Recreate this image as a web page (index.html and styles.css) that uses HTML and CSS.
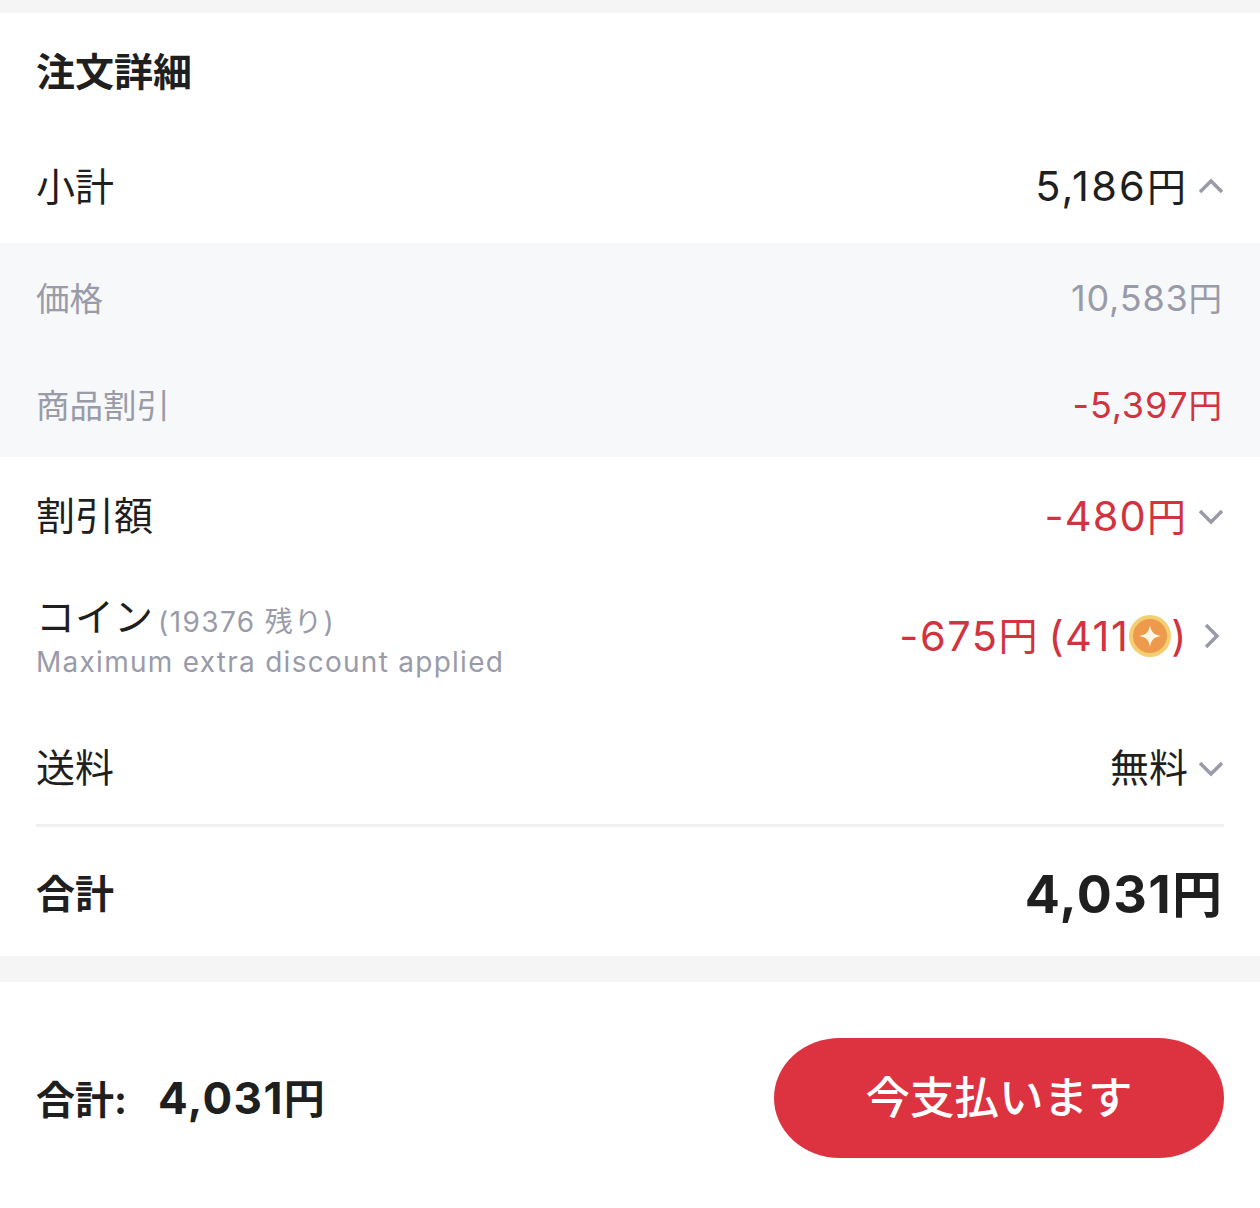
FILE: index.html
```html
<!DOCTYPE html>
<html lang="ja">
<head>
    <meta charset="UTF-8">
    <meta name="viewport" content="width=device-width, initial-scale=1.0">
    <title>注文詳細</title>
    <link rel="stylesheet" href="styles.css">
</head>
<body>
    <section class="order-card">
        <h2 class="order-title">注文詳細</h2>

        <div class="row row-subtotal">
            <span class="row-label">小計</span>
            <div class="row-value">
                <span><span class="num">5,186</span>円</span>
                <svg class="chevron" viewBox="0 0 24 24"><path d="M1 17 L12 6 L23 17"/></svg>
            </div>
        </div>

        <div class="sub-panel">
            <div class="sub-row">
                <span>価格</span>
                <span><span class="sub-num">10,583</span>円</span>
            </div>
            <div class="sub-row">
                <span>商品割引</span>
                <span class="red"><span class="sub-num">-5,397</span>円</span>
            </div>
        </div>

        <div class="row row-discount">
            <span class="row-label">割引額</span>
            <div class="row-value red">
                <span><span class="num">-480</span>円</span>
                <svg class="chevron" viewBox="0 0 24 24"><path d="M1 7 L12 18 L23 7"/></svg>
            </div>
        </div>

        <div class="row row-coin">
            <div class="coin-info">
                <div class="coin-head">
                    <span class="row-label">コイン</span>
                    <span class="coin-left">(19376 残り)</span>
                </div>
                <div class="coin-note">Maximum extra discount applied</div>
            </div>
            <div class="row-value red">
                <span class="coin-amount"><span class="num">-675</span>円 <span class="num">(411</span><svg class="coin" viewBox="0 0 42 42">
                    <circle cx="21" cy="21" r="21" fill="#f3cf72"/>
                    <circle cx="21" cy="21" r="17" fill="#ee9a4c"/>
                    <path d="M21 10 C22 17 25 20 32 21 C25 22 22 25 21 32 C20 25 17 22 10 21 C17 20 20 17 21 10 Z" fill="#fff6e6"/>
                </svg><span class="num">)</span></span>
                <svg class="chevron chevron-right" viewBox="0 0 24 24"><path d="M7 1 L18 12 L7 23"/></svg>
            </div>
        </div>

        <div class="row row-shipping">
            <span class="row-label">送料</span>
            <div class="row-value">
                <span>無料</span>
                <svg class="chevron" viewBox="0 0 24 24"><path d="M1 7 L12 18 L23 7"/></svg>
            </div>
        </div>

        <div class="row row-total">
            <span class="total-label">合計</span>
            <span class="total-value"><span class="total-num">4,031</span>円</span>
        </div>
    </section>

    <footer class="pay-bar">
        <div class="pay-total">合計:<span class="pay-num">4,031</span><span class="pay-yen">円</span></div>
        <button class="pay-button">今支払います</button>
    </footer>
</body>
</html>
```

FILE: styles.css
```css
body {
    margin: 0;
    padding-top: 13px;
    background-color: #f5f5f5;
    font-family: Inter, "Noto Sans CJK JP", sans-serif;
    color: #1f1f1f;
}
.order-card {
    height: 943px;
    background-color: #fff;
    margin-bottom: 26px;
}
.order-title {
    margin: 0;
    height: 117px;
    padding: 0 36px;
    line-height: 118px;
    font-size: 39px;
    font-weight: 700;
}
.row {
    display: flex;
    justify-content: space-between;
    align-items: center;
    margin: 0 36px;
}
.row-subtotal {
    height: 113px;
}
.row-discount {
    height: 118px;
}
.row-coin {
    height: 122px;
}
.row-shipping {
    height: 130px;
    padding-top: 14px;
    box-sizing: border-box;
    border-bottom: 3px solid #f0f0f0;
}
.row-total {
    height: 128px;
}
.row-label {
    font-size: 39px;
    line-height: 50px;
}
.row-value {
    display: flex;
    align-items: center;
    font-size: 39px;
    line-height: 50px;
}
.num {
    font-size: 41.5px;
    letter-spacing: 1.8px;
}
.row-subtotal .num {
    letter-spacing: 2.2px;
}
.row-discount .num {
    letter-spacing: 1.2px;
}
.coin-amount {
    display: flex;
    align-items: center;
    white-space: pre;
}
.coin-amount .num {
    letter-spacing: 1.5px;
}
.chevron {
    width: 24px;
    height: 24px;
    margin: 0 1px 0 13px;
    fill: none;
    stroke: #9a9ba9;
    stroke-width: 3.5;
}
.row-shipping .chevron {
    margin-left: 11px;
}
.chevron-right {
    margin-left: 11px;
}
.red {
    color: #d1333f;
}
.sub-panel {
    background-color: #f7f8fa;
    padding: 0 38px 0 36px;
    color: #9a9ba9;
}
.sub-row {
    display: flex;
    justify-content: space-between;
    align-items: center;
    height: 107px;
    font-size: 33.5px;
}
.sub-num {
    font-size: 36px;
    letter-spacing: 0.8px;
}
.coin-info {
    padding-bottom: 3px;
}
.coin-head {
    display: flex;
    align-items: center;
    gap: 5px;
}
.coin-head .row-label {
    padding-bottom: 4px;
}
.coin-left {
    padding-top: 3px;
    font-size: 28px;
    letter-spacing: 1.4px;
    color: #9a9ba9;
}
.coin-note {
    font-size: 28px;
    letter-spacing: 1.27px;
    line-height: 32px;
    color: #9a9ba9;
}
.coin {
    width: 42px;
    height: 42px;
}
.total-label {
    font-size: 39px;
    font-weight: 700;
}
.total-value {
    font-size: 50px;
    font-weight: 700;
    margin-right: 2px;
}
.total-num {
    font-size: 52px;
    letter-spacing: 1.4px;
}
.pay-bar {
    display: flex;
    justify-content: space-between;
    align-items: center;
    height: 226px;
    box-sizing: border-box;
    padding: 6px 36px 0;
    background-color: #fff;
}
.pay-total {
    padding-bottom: 4px;
    font-size: 39px;
    font-weight: 700;
}
.pay-num {
    font-size: 44px;
    letter-spacing: 1.4px;
    margin-left: 31px;
}
.pay-yen {
    font-size: 41px;
}
.pay-button {
    width: 450px;
    height: 120px;
    padding: 0 0 7px;
    border: 0;
    border-radius: 66px / 60px;
    background-color: #dd3240;
    color: #fff;
    font-family: inherit;
    font-size: 44.5px;
    font-weight: 500;
}
```
